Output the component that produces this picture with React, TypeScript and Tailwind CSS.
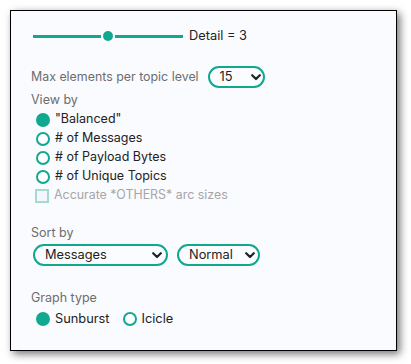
import React from "react";

const Chevron = () => (
  <svg width="10" height="7" viewBox="0 0 10 7" className="shrink-0">
    <path d="M1.2 1.2 L5 5 L8.8 1.2" fill="none" stroke="#222" strokeWidth="2.2" strokeLinecap="round" strokeLinejoin="round" />
  </svg>
);

const Select = ({ label, width, textPl, chevPr }: { label: string; width: string; textPl: string; chevPr: string }) => (
  <div className={`flex h-[22px] ${width} items-center justify-between rounded-full border-2 border-[#10a88f] bg-[#fbfcff] ${textPl} ${chevPr}`}>
    <span className="text-[12.8px] leading-none text-[#222]">{label}</span>
    <Chevron />
  </div>
);

const Radio = ({ checked }: { checked?: boolean }) =>
  checked ? (
    <span className="block h-[14px] w-[14px] shrink-0 rounded-full bg-[#10a88f]" />
  ) : (
    <span className="block h-[14px] w-[14px] shrink-0 rounded-full border-2 border-[#10a88f] bg-white" />
  );

const RadioRow = ({ label, checked }: { label: string; checked?: boolean }) => (
  <div className="flex h-[19px] items-center gap-[5px] pl-[5px]">
    <Radio checked={checked} />
    <span className="text-[12.5px] text-[#222]">{label}</span>
  </div>
);

export default function App() {
  return (
    <div className="h-[364px] w-[411px] bg-white pl-[10px] pt-[10px]" style={{ fontFamily: "Inter, 'Noto Sans', sans-serif" }}>
      <div className="flex h-[341px] w-[387px] flex-col border border-black bg-[#fafbfe] pl-[20px] pt-[18px] shadow-[3px_3px_8px_rgba(0,0,0,0.55)]">
        <div className="flex h-[14px] items-center pl-[2px]">
          <span className="block h-[3px] w-[68px] bg-[#10a88f]" />
          <span className="ml-[2px] block h-[10px] w-[10px] rounded-full bg-[#10a88f]" />
          <span className="ml-[2px] block h-[3px] w-[68px] bg-[#10a88f]" />
          <span className="ml-[6px] text-[12.8px] text-[#222]">Detail = 3</span>
        </div>

        <div className="mt-[23px] flex h-[22px] items-center">
          <span className="text-[12.4px] text-[#6d6d6d]">Max elements per topic level</span>
          <div className="ml-[9px]">
            <Select label="15" width="w-[57px]" textPl="pl-[10px]" chevPr="pr-[2px]" />
          </div>
        </div>

        <div className="mt-[3px] flex h-[18px] items-center text-[12.5px] text-[#6d6d6d]">View by</div>

        <div className="mt-[1px] flex flex-col">
          <RadioRow label={'"Balanced"'} checked />
          <RadioRow label="# of Messages" />
          <RadioRow label="# of Payload Bytes" />
          <RadioRow label="# of Unique Topics" />
          <div className="flex h-[19px] items-center gap-[5px] pl-[4px]">
            <span className="block h-[14px] w-[14px] shrink-0 border-2 border-[#a3dbd0] bg-[#f4f6ff]" />
            <span className="text-[12.4px] text-[#a6a6a6]">Accurate *OTHERS* arc sizes</span>
          </div>
        </div>

        <div className="mt-[19px] flex h-[18px] items-center text-[12.5px] text-[#6d6d6d]">Sort by</div>
        <div className="mt-[2px] flex gap-[9px] pl-[2px]">
          <Select label="Messages" width="w-[135px]" textPl="pl-[10px]" chevPr="pr-[4px]" />
          <Select label="Normal" width="w-[83px]" textPl="pl-[10px]" chevPr="pr-[3px]" />
        </div>

        <div className="mt-[23px] flex h-[18px] items-center text-[12.5px] text-[#6d6d6d]">Graph type</div>
        <div className="mt-[2px] flex h-[19px] items-center pl-[5px]">
          <Radio checked />
          <span className="ml-[5px] text-[12.8px] text-[#222]">Sunburst</span>
          <span className="ml-[13px]"><Radio /></span>
          <span className="ml-[5px] text-[12.8px] text-[#222]">Icicle</span>
        </div>
      </div>
    </div>
  );
}
